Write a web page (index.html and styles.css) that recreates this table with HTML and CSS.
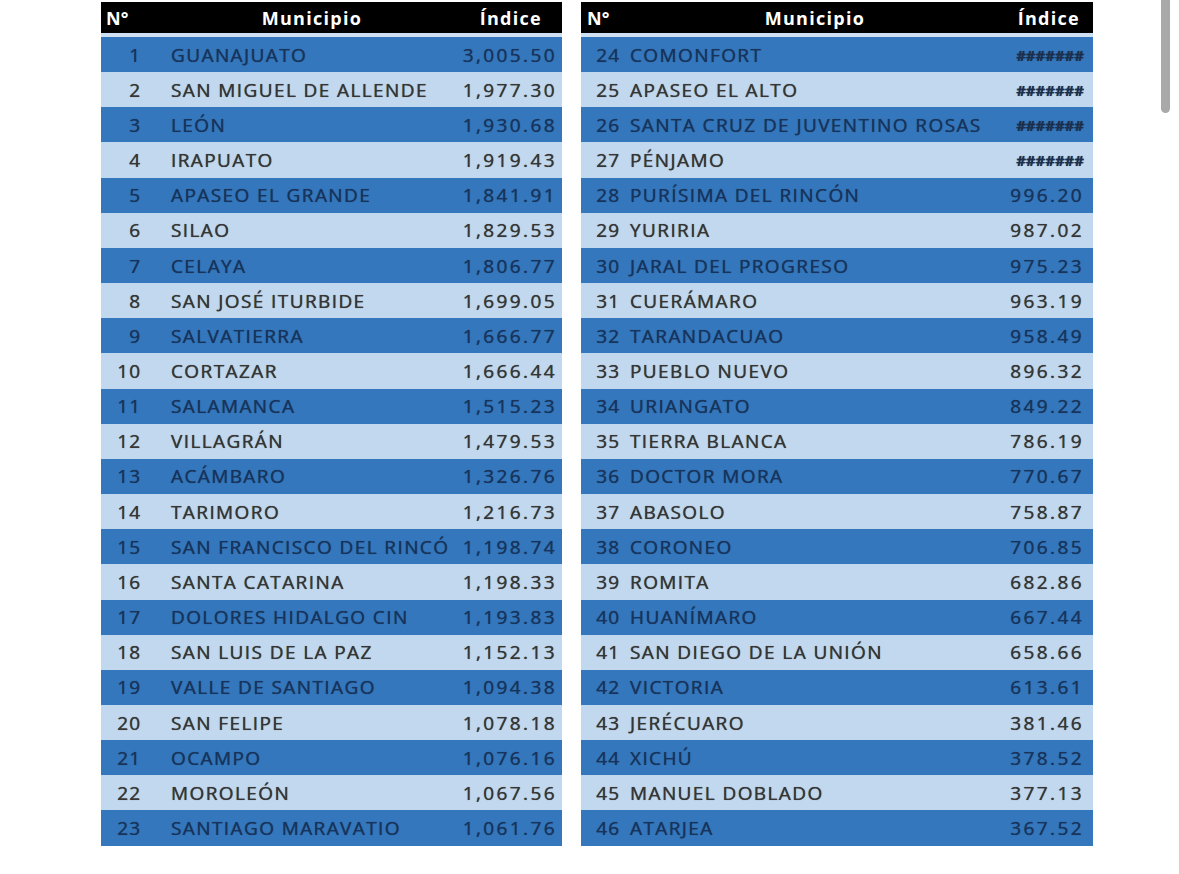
FILE: index.html
```html
<!DOCTYPE html>
<html lang="es">
<head>
<meta charset="utf-8">
<title>Índice por municipio</title>
<link rel="stylesheet" href="styles.css">
</head>
<body>
<div class="page">
  <div class="sheet sheet-left">
    <div class="head">
      <div class="h-num">N°</div>
      <div class="h-name">Municipio</div>
      <div class="h-val">Índice</div>
    </div>
    <div class="row dark"><div class="num">1</div><div class="name">GUANAJUATO</div><div class="val">3,005.50</div></div>
    <div class="row light"><div class="num">2</div><div class="name">SAN MIGUEL DE ALLENDE</div><div class="val">1,977.30</div></div>
    <div class="row dark"><div class="num">3</div><div class="name">LEÓN</div><div class="val">1,930.68</div></div>
    <div class="row light"><div class="num">4</div><div class="name">IRAPUATO</div><div class="val">1,919.43</div></div>
    <div class="row dark"><div class="num">5</div><div class="name">APASEO EL GRANDE</div><div class="val">1,841.91</div></div>
    <div class="row light"><div class="num">6</div><div class="name">SILAO</div><div class="val">1,829.53</div></div>
    <div class="row dark"><div class="num">7</div><div class="name">CELAYA</div><div class="val">1,806.77</div></div>
    <div class="row light"><div class="num">8</div><div class="name">SAN JOSÉ ITURBIDE</div><div class="val">1,699.05</div></div>
    <div class="row dark"><div class="num">9</div><div class="name">SALVATIERRA</div><div class="val">1,666.77</div></div>
    <div class="row light"><div class="num">10</div><div class="name">CORTAZAR</div><div class="val">1,666.44</div></div>
    <div class="row dark"><div class="num">11</div><div class="name">SALAMANCA</div><div class="val">1,515.23</div></div>
    <div class="row light"><div class="num">12</div><div class="name">VILLAGRÁN</div><div class="val">1,479.53</div></div>
    <div class="row dark"><div class="num">13</div><div class="name">ACÁMBARO</div><div class="val">1,326.76</div></div>
    <div class="row light"><div class="num">14</div><div class="name">TARIMORO</div><div class="val">1,216.73</div></div>
    <div class="row dark"><div class="num">15</div><div class="name">SAN FRANCISCO DEL RINCÓ</div><div class="val">1,198.74</div></div>
    <div class="row light"><div class="num">16</div><div class="name">SANTA CATARINA</div><div class="val">1,198.33</div></div>
    <div class="row dark"><div class="num">17</div><div class="name">DOLORES HIDALGO CIN</div><div class="val">1,193.83</div></div>
    <div class="row light"><div class="num">18</div><div class="name">SAN LUIS DE LA PAZ</div><div class="val">1,152.13</div></div>
    <div class="row dark"><div class="num">19</div><div class="name">VALLE DE SANTIAGO</div><div class="val">1,094.38</div></div>
    <div class="row light"><div class="num">20</div><div class="name">SAN FELIPE</div><div class="val">1,078.18</div></div>
    <div class="row dark"><div class="num">21</div><div class="name">OCAMPO</div><div class="val">1,076.16</div></div>
    <div class="row light"><div class="num">22</div><div class="name">MOROLEÓN</div><div class="val">1,067.56</div></div>
    <div class="row dark"><div class="num">23</div><div class="name">SANTIAGO MARAVATIO</div><div class="val">1,061.76</div></div>
  </div>

  <div class="sheet sheet-right">
    <div class="head">
      <div class="h-num">N°</div>
      <div class="h-name">Municipio</div>
      <div class="h-val">Índice</div>
    </div>
    <div class="row dark"><div class="num">24</div><div class="name">COMONFORT</div><div class="val hash">#######</div></div>
    <div class="row light"><div class="num">25</div><div class="name">APASEO EL ALTO</div><div class="val hash">#######</div></div>
    <div class="row dark"><div class="num">26</div><div class="name">SANTA CRUZ DE JUVENTINO ROSAS</div><div class="val hash">#######</div></div>
    <div class="row light"><div class="num">27</div><div class="name">PÉNJAMO</div><div class="val hash">#######</div></div>
    <div class="row dark"><div class="num">28</div><div class="name">PURÍSIMA DEL RINCÓN</div><div class="val">996.20</div></div>
    <div class="row light"><div class="num">29</div><div class="name">YURIRIA</div><div class="val">987.02</div></div>
    <div class="row dark"><div class="num">30</div><div class="name">JARAL DEL PROGRESO</div><div class="val">975.23</div></div>
    <div class="row light"><div class="num">31</div><div class="name">CUERÁMARO</div><div class="val">963.19</div></div>
    <div class="row dark"><div class="num">32</div><div class="name">TARANDACUAO</div><div class="val">958.49</div></div>
    <div class="row light"><div class="num">33</div><div class="name">PUEBLO NUEVO</div><div class="val">896.32</div></div>
    <div class="row dark"><div class="num">34</div><div class="name">URIANGATO</div><div class="val">849.22</div></div>
    <div class="row light"><div class="num">35</div><div class="name">TIERRA BLANCA</div><div class="val">786.19</div></div>
    <div class="row dark"><div class="num">36</div><div class="name">DOCTOR MORA</div><div class="val">770.67</div></div>
    <div class="row light"><div class="num">37</div><div class="name">ABASOLO</div><div class="val">758.87</div></div>
    <div class="row dark"><div class="num">38</div><div class="name">CORONEO</div><div class="val">706.85</div></div>
    <div class="row light"><div class="num">39</div><div class="name">ROMITA</div><div class="val">682.86</div></div>
    <div class="row dark"><div class="num">40</div><div class="name">HUANÍMARO</div><div class="val">667.44</div></div>
    <div class="row light"><div class="num">41</div><div class="name">SAN DIEGO DE LA UNIÓN</div><div class="val">658.66</div></div>
    <div class="row dark"><div class="num">42</div><div class="name">VICTORIA</div><div class="val">613.61</div></div>
    <div class="row light"><div class="num">43</div><div class="name">JERÉCUARO</div><div class="val">381.46</div></div>
    <div class="row dark"><div class="num">44</div><div class="name">XICHÚ</div><div class="val">378.52</div></div>
    <div class="row light"><div class="num">45</div><div class="name">MANUEL DOBLADO</div><div class="val">377.13</div></div>
    <div class="row dark"><div class="num">46</div><div class="name">ATARJEA</div><div class="val">367.52</div></div>
  </div>
</div>
<div class="scrollbar"></div>
</body>
</html>
```

FILE: styles.css
```css
html, body {
  margin: 0;
  padding: 0;
  background: #ffffff;
}

body {
  width: 1179px;
  height: 874px;
  overflow: hidden;
  font-family: "Open Sans", "Liberation Sans", sans-serif;
}

.page {
  display: flex;
  gap: 19px;
  padding: 2px 0 0 101px;
}

.sheet {
  display: flex;
  flex-direction: column;
}

.sheet-left { width: 461px; }
.sheet-right { width: 512px; }

.head {
  display: grid;
  height: 31px;
  align-items: center;
  background: #000000;
  color: #ffffff;
  font-weight: 700;
  font-size: 18px;
  letter-spacing: 1.3px;
  border-bottom: 4px solid #cfe0f2;
}

.sheet-left .head { grid-template-columns: 60px 302px 99px; }
.sheet-right .head { grid-template-columns: 50px 368px 94px; }

.h-num { padding-left: 5px; letter-spacing: 0; }
.sheet-right .h-num { padding-left: 6px; }
.h-name { text-align: center; }
.h-val { text-align: right; padding-right: 20px; }
.sheet-right .h-val { padding-right: 13px; }

.row {
  display: grid;
  height: 35.17px;
  align-items: center;
  font-size: 19px;
  letter-spacing: 1.4px;
  white-space: nowrap;
  text-shadow: 0 0 0.7px currentColor;
}

.sheet-left .row { grid-template-columns: 44px 310px 107px; }
.sheet-right .row { grid-template-columns: 40px 362px 110px; }

.dark {
  background: #3477bc;
  color: #18345c;
}

.light {
  background: #c2d8ee;
  color: #363636;
}

.num {
  text-align: right;
  padding-right: 4px;
  letter-spacing: 1px;
}

.sheet-right .num { padding-right: 1px; }

.name {
  overflow: hidden;
  padding-left: 26px;
}

.sheet-right .name { padding-left: 9px; }

.val {
  text-align: right;
  padding-right: 5px;
  letter-spacing: 2.4px;
}

.sheet-right .val { padding-right: 9px; }

.hash {
  font-size: 15px;
  font-weight: 700;
  letter-spacing: 0;
  color: #1c2f4d;
}

.scrollbar {
  position: absolute;
  top: 0;
  left: 1161px;
  width: 9px;
  height: 113px;
  background: #a9a9a9;
  border-radius: 0 0 5px 5px;
}
```
